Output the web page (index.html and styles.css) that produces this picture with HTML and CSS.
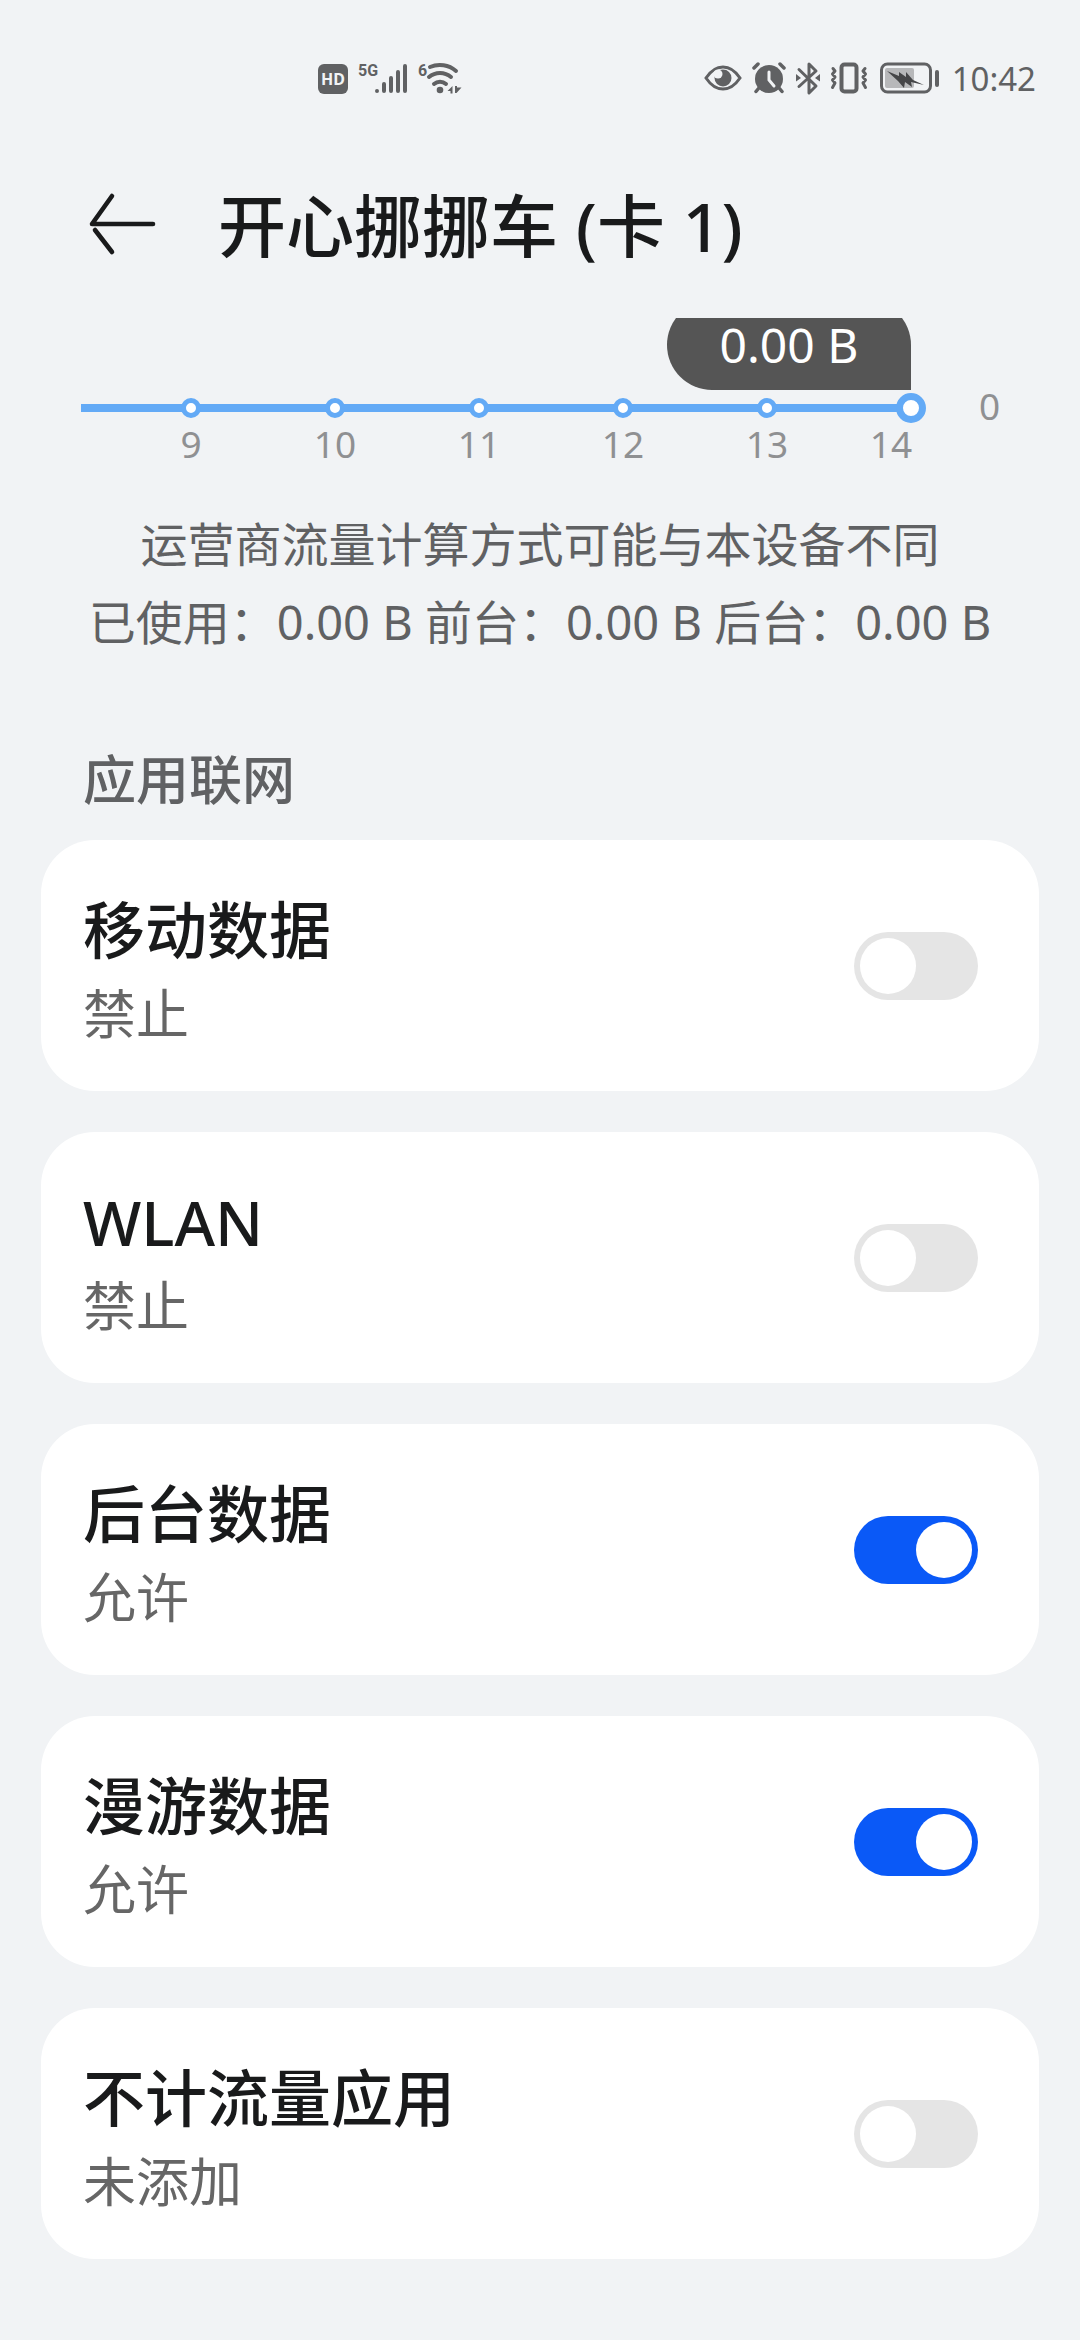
FILE: index.html
```html
<!DOCTYPE html>
<html lang="zh-CN">
<head>
    <meta charset="UTF-8">
    <meta name="viewport" content="width=device-width, initial-scale=1.0">
    <title>开心挪挪车 (卡 1)</title>
    <link rel="stylesheet" href="styles.css">
</head>
<body>
    <!-- Status bar -->
    <div class="status-bar">
        <div class="status-group">
            <svg class="icon" width="30" height="34" viewBox="0 0 30 34">
                <rect y="2" width="30" height="30" rx="6" fill="#606163"/>
                <text class="hd-text" x="15" y="23" text-anchor="middle">HD</text>
            </svg>
            <svg class="icon signal" width="50" height="34" viewBox="0 0 50 34">
                <text class="tag-text" x="0" y="14">5G</text>
                <g stroke="#606163" stroke-width="4" stroke-linecap="round">
                    <path d="M19 29v0M26 29v-7M33 29V16M40 29V10M47 29V4"/>
                </g>
            </svg>
            <svg class="icon wifi" width="44" height="34" viewBox="0 0 44 34">
                <text class="tag-text" x="0" y="14">6</text>
                <g fill="none" stroke="#606163" stroke-width="4" stroke-linecap="round">
                    <path d="M12 5a25 25 0 0 1 26 4"/>
                    <path d="M11 15a17 17 0 0 1 22 0"/>
                    <path d="M16 22a9 9 0 0 1 12 0"/>
                </g>
                <circle cx="22" cy="28" r="3.3" fill="#606163"/>
                <path d="M29.5 29l5-5v7.5h-2V29zM37 24h2v1.5h4.5l-5 5.500H37z" fill="#606163"/>
            </svg>
        </div>
        <div class="status-group">
            <svg class="icon eye" width="38" height="34" viewBox="0 0 38 34">
                <path d="M2 16C7 8.500 12.5 5 19 5s12 3.500 17 11c-5 7.500-10.500 11-17 11S7 23.500 2 16z" fill="none" stroke="#606163" stroke-width="3"/>
                <circle cx="19" cy="16" r="8.5" fill="#606163"/>
                <circle cx="14" cy="12" r="4.5" fill="#f1f3f5"/>
            </svg>
            <svg class="icon alarm" width="34" height="34" viewBox="0 0 34 34">
                <g stroke="#606163" stroke-width="3.5" stroke-linecap="round" fill="none">
                    <path d="M2 6l4-4M28 2l4 4M6.5 26.5L4 29.5M27.5 26.5l2.5 3"/>
                </g>
                <circle cx="17" cy="17" r="14" fill="#606163"/>
                <path d="M17 10v8l5 6" fill="none" stroke="#f1f3f5" stroke-width="3" stroke-linecap="round"/>
            </svg>
            <svg class="icon bluetooth" width="24" height="34" viewBox="0 0 24 34">
                <path d="M3 7.500L20 24l-7 7V2l7 7L3 24.500" fill="none" stroke="#606163" stroke-width="3" stroke-linejoin="round" stroke-linecap="round"/>
                <path d="M0 12l5 4-5 3.500zM24 12l-5 4 5 3.500z" fill="#606163"/>
            </svg>
            <svg class="icon vibrate" width="38" height="34" viewBox="0 0 38 34">
                <g fill="none" stroke="#606163" stroke-width="3" stroke-linejoin="round" stroke-linecap="round">
                    <rect x="11.5" y="2.5" width="15" height="27" rx="3" stroke-width="4"/>
                    <path d="M3 6.500L5 9 2.500 12 5 15l-2.500 3L5 21l-2.500 4.500M35 6.500L33 9l2.500 3L33 15l2.500 3L33 21l2.500 4.500"/>
                </g>
            </svg>
            <svg class="icon battery" width="60" height="34" viewBox="0 0 60 34">
                <rect x="1.5" y="2" width="49" height="28" rx="6" fill="none" stroke="#606163" stroke-width="3"/>
                <rect x="5" y="6" width="29" height="20" rx="2" fill="#b7b8ba"/>
                <path d="M7 9l12 5v-4l7 5v-5l7 8 11 5-13-3 1 5-7-5-1 6-6-7z" fill="#454648"/>
                <rect x="55" y="8" width="4" height="17" rx="2" fill="#606163"/>
            </svg>
            <span class="time">10:42</span>
        </div>
    </div>

    <!-- Page header -->
    <header class="header">
        <button type="button" class="back" aria-label="返回">
            <svg width="68" height="64" viewBox="0 0 68 64" fill="none" stroke="#191a1b" stroke-width="4.6" stroke-linecap="round" stroke-linejoin="round">
                <path d="M65 32H4L24 4M7 38l17 22"/>
            </svg>
        </button>
        <h1>开心挪挪车 (卡 1)</h1>
    </header>

    <main>
        <!-- Daily usage chart -->
        <section class="chart">
            <ol class="days">
                <li><span class="point"></span><span class="day">9</span></li>
                <li><span class="point"></span><span class="day">10</span></li>
                <li><span class="point"></span><span class="day">11</span></li>
                <li><span class="point"></span><span class="day">12</span></li>
                <li><span class="point"></span><span class="day">13</span></li>
                <li class="current">
                    <span class="point"></span><span class="day">14</span>
                    <span class="tooltip">0.00 B</span>
                </li>
            </ol>
            <span class="axis-value">0</span>
        </section>

        <div class="summary">
            <p>运营商流量计算方式可能与本设备不同</p>
            <p>已使用：0.00 B 前台：0.00 B 后台：0.00 B</p>
        </div>

        <!-- Network access switches -->
        <h2>应用联网</h2>
        <div class="cards">
            <label class="card" for="mobileData">
                <span class="card-text">
                    <span class="card-title">移动数据</span>
                    <span class="card-state">禁止</span>
                </span>
                <input type="checkbox" class="switch" id="mobileData">
            </label>
            <label class="card" for="wlan">
                <span class="card-text">
                    <span class="card-title">WLAN</span>
                    <span class="card-state">禁止</span>
                </span>
                <input type="checkbox" class="switch" id="wlan">
            </label>
            <label class="card" for="backgroundData">
                <span class="card-text">
                    <span class="card-title">后台数据</span>
                    <span class="card-state">允许</span>
                </span>
                <input type="checkbox" class="switch" id="backgroundData" checked>
            </label>
            <label class="card" for="roamingData">
                <span class="card-text">
                    <span class="card-title">漫游数据</span>
                    <span class="card-state">允许</span>
                </span>
                <input type="checkbox" class="switch" id="roamingData" checked>
            </label>
            <label class="card" for="unmetered">
                <span class="card-text">
                    <span class="card-title">不计流量应用</span>
                    <span class="card-state">未添加</span>
                </span>
                <input type="checkbox" class="switch" id="unmetered">
            </label>
        </div>
    </main>
</body>
</html>
```
FILE: styles.css
```css
* {
    box-sizing: border-box;
}
body {
    margin: 0;
    background-color: #f1f3f5;
    color: #191a1b;
    font-family: "Noto Sans", "Noto Sans CJK SC", sans-serif;
}
h1, h2, p, ol {
    margin: 0;
    padding: 0;
}
h1, h2 {
    font-weight: 500;
}

/* Status bar */
.status-bar {
    display: flex;
    justify-content: space-between;
    padding: 62px 44px 0 318px;
}
.status-group {
    display: flex;
    align-items: center;
    height: 34px;
    gap: 10px;
}
.icon {
    display: block;
    flex: none;
    overflow: visible;
}
.hd-text {
    font-size: 16px;
    font-weight: 700;
    fill: #f1f3f5;
}
.tag-text {
    font-family: Roboto, sans-serif;
    font-size: 16px;
    font-weight: 700;
    fill: #606163;
}
.battery {
    margin-left: 2px;
}
.time {
    margin-left: 2px;
    font-size: 33px;
    line-height: 34px;
    color: #606163;
}

/* Header */
.header {
    display: flex;
    align-items: center;
    height: 132px;
    margin: 62px 40px 28px 88px;
    gap: 62px;
}
.back {
    display: flex;
    padding: 0;
    border: none;
    background: none;
    cursor: pointer;
}
h1 {
    padding-top: 4px;
    font-size: 68px;
    line-height: 80px;
}

/* Chart */
.chart {
    display: flex;
    padding: 75px 81px 20px;
    overflow: hidden;
}
.days {
    position: relative;
    display: flex;
    flex: 1;
    padding-left: 38px;
    list-style: none;
}
.days::before {
    content: "";
    position: absolute;
    top: 11px;
    left: 0;
    right: 72px;
    height: 8px;
    background-color: #63aaf6;
}
.days li {
    position: relative;
    display: flex;
    flex: 1;
    flex-direction: column;
    align-items: center;
}
.point {
    width: 20px;
    height: 20px;
    margin: 5px 0;
    border: 5px solid #63aaf6;
    border-radius: 50%;
    background-color: #fff;
}
.current .point {
    width: 30px;
    height: 30px;
    margin: 0;
    border-width: 7px;
}
.day, .axis-value {
    font-size: 37px;
    line-height: 42px;
    color: #8f9092;
}
.current .day {
    padding-right: 40px;
}
.axis-value {
    flex: none;
    width: 20px;
    margin: -8px 0 0 -4px;
}
.tooltip {
    position: absolute;
    top: -93px;
    right: 50%;
    width: 244px;
    border-radius: 45px 45px 0 45px;
    background-color: #555;
    color: #fff;
    font-size: 48px;
    line-height: 90px;
    text-align: center;
}

/* Usage summary */
.summary {
    margin-top: 20px;
    font-size: 47px;
    line-height: 78px;
    text-align: center;
    color: #606163;
}

/* Cards */
h2 {
    margin: 89px 83px 30px;
    font-size: 53px;
    line-height: 60px;
    color: #606163;
}
.cards {
    display: flex;
    flex-direction: column;
    gap: 41px;
    padding: 0 41px 80px;
}
.card {
    display: flex;
    align-items: center;
    justify-content: space-between;
    padding: 0 61px 0 42px;
    border-radius: 54px;
    background-color: #fff;
    cursor: pointer;
}
.card-text {
    display: flex;
    flex-direction: column;
    padding: 48px 0 35px;
    line-height: 84px;
}
.card-title {
    font-size: 62px;
    font-weight: 500;
}
.card-state {
    font-size: 53px;
    color: #666;
}
.switch {
    appearance: none;
    flex: none;
    width: 124px;
    height: 68px;
    margin: 0;
    padding: 6px;
    border-radius: 34px;
    background-color: #e5e5e5;
    cursor: pointer;
}
.switch::before {
    content: "";
    display: block;
    width: 56px;
    height: 56px;
    border-radius: 50%;
    background-color: #fff;
}
.switch:checked {
    background-color: #0a59f7;
}
.switch:checked::before {
    margin-left: auto;
}
```
